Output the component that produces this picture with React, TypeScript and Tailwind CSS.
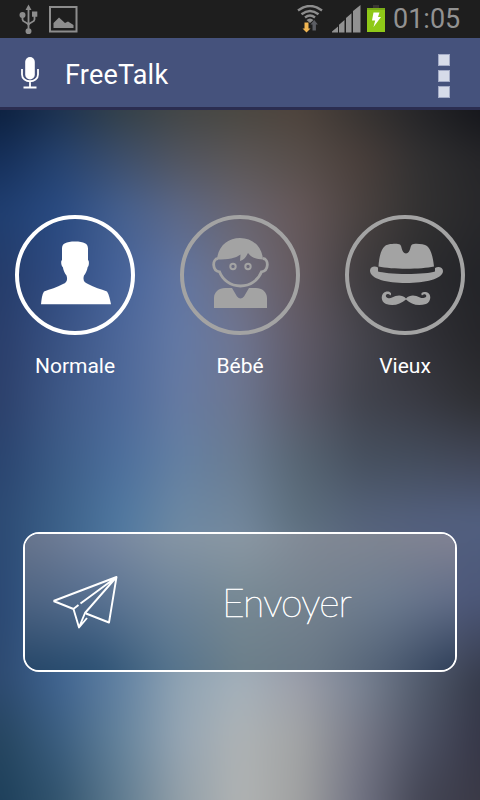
import { useState } from "react";
import type { ReactNode } from "react";

type Voice = "normale" | "bebe" | "vieux";

type MeshProps = {
  id: string;
  width: number;
  height: number;
  stops: number[];
  rows: { y: number; colors: string[] }[];
};

// How far the mesh runs past its box, so that the blur never shows an edge
const BLEED = 50;

// Each row is a horizontal gradient that fades in from the row above it.
function ColorMesh({ id, width, height, stops, rows }: MeshProps) {
  const area = { x: -BLEED, y: -BLEED, width: width + BLEED * 2, height: height + BLEED * 2 };

  return (
    <svg
      aria-hidden="true"
      viewBox={`0 0 ${width} ${height}`}
      className="absolute inset-0 h-full w-full overflow-visible blur-[12px]"
    >
      {rows.map((row, i) => (
        <g key={row.y}>
          <linearGradient id={`${id}-row-${i}`} gradientUnits="userSpaceOnUse" x1={0} x2={width}>
            {row.colors.map((color, c) => (
              <stop key={c} offset={stops[c] / width} stopColor={color} />
            ))}
          </linearGradient>
          {i > 0 && (
            <>
              <linearGradient
                id={`${id}-fade-${i}`}
                gradientUnits="userSpaceOnUse"
                x1={0}
                x2={0}
                y1={rows[i - 1].y}
                y2={row.y}
              >
                <stop offset={0} stopColor="#fff" stopOpacity={0} />
                <stop offset={1} stopColor="#fff" stopOpacity={1} />
              </linearGradient>
              <mask id={`${id}-mask-${i}`} maskUnits="userSpaceOnUse" {...area}>
                <rect {...area} fill={`url(#${id}-fade-${i})`} />
              </mask>
            </>
          )}
          <rect {...area} fill={`url(#${id}-row-${i})`} mask={i > 0 ? `url(#${id}-mask-${i})` : undefined} />
        </g>
      ))}
    </svg>
  );
}

const PAGE_STOPS = [0, 60, 120, 180, 240, 300, 360, 420, 480];

const PAGE_ROWS = [
  { y: 0, colors: ["#0c203f", "#1d3250", "#334049", "#434646", "#4a4741", "#4e433c", "#383432", "#252528", "#15161b"] },
  { y: 50, colors: ["#152f5a", "#264370", "#3d4f6d", "#525661", "#5c5757", "#584f4b", "#4a3f3b", "#323132", "#262629"] },
  { y: 100, colors: ["#1f3e70", "#2a4b82", "#45608f", "#5d6886", "#69656f", "#665859", "#4b4341", "#333232", "#28282b"] },
  { y: 165, colors: ["#253c6a", "#304c82", "#46639a", "#6276a2", "#706f80", "#655a5f", "#403d40", "#2c2c2f", "#232428"] },
  { y: 230, colors: ["#2a3e6b", "#3a5384", "#4d6799", "#647aa6", "#6f7591", "#615b68", "#46454d", "#323238", "#26262a"] },
  { y: 290, colors: ["#2c406b", "#3e5886", "#4d6999", "#667ba3", "#6c7690", "#5c5b6a", "#42444e", "#393a43", "#2e2f33"] },
  { y: 350, colors: ["#2a446f", "#3c5c87", "#4d6f9c", "#6480a3", "#6a7c92", "#576573", "#475160", "#444d5d", "#424758"] },
  { y: 410, colors: ["#2c4a73", "#3c6189", "#5078a0", "#6c88a3", "#71869b", "#5d6f7e", "#55637a", "#53607d", "#526080"] },
  { y: 490, colors: ["#2b4873", "#3d648f", "#577d9f", "#7890a8", "#8494a8", "#74839a", "#606b85", "#545e80", "#4c5778"] },
  { y: 570, colors: ["#2d4a70", "#416591", "#6282a3", "#90a4b4", "#a4b1bb", "#9c9faa", "#7a8494", "#535d6e", "#353a4a"] },
  { y: 630, colors: ["#25455f", "#3b5e80", "#64839c", "#95a5b3", "#aeb3b5", "#a2a4a5", "#787a88", "#4e5365", "#363748"] },
  { y: 690, colors: ["#1d3f5a", "#32546e", "#5f7b90", "#929fa8", "#b0b3b3", "#a0a1a1", "#707282", "#444655", "#3a3946"] },
];

const BUTTON_STOPS = [0, 72, 144, 216, 288, 360, 432];

const BUTTON_ROWS = [
  { y: 0, colors: ["#68758d", "#7585a0", "#8595a5", "#8a98a4", "#818995", "#7f8592", "#828394"] },
  { y: 67, colors: ["#4d6382", "#566f90", "#6b8299", "#778994", "#75828f", "#6c7b8f", "#606c87"] },
  { y: 138, colors: ["#244567", "#2b5073", "#53728c", "#6c7f8a", "#697886", "#505f74", "#2c3c56"] },
];

function UsbIcon() {
  return (
    <svg viewBox="0 0 20 30" className="h-[30px] w-5 fill-none stroke-[#8d8d8d] stroke-[1.8]">
      <path d="M9.500 5v21M3.500 11v4.500c0 3 6 2.500 6 6M15.500 10v5.500c0 3-6 2.500-6 6" />
      <path d="M9.500 0.500l3 5.500h-6zM0.500 11a3 3 0 1 0 6 0a3 3 0 1 0-6 0M13 7.500h5.300v5.300H13zM6.500 27.200a3 3 0 1 0 6 0a3 3 0 1 0-6 0" className="fill-[#8d8d8d] stroke-none" />
    </svg>
  );
}

function PictureIcon() {
  return (
    <svg viewBox="0 0 29 27" className="h-[27px] w-[29px]">
      <rect x="1" y="1" width="26.500" height="24.500" className="fill-none stroke-[#8d8d8d] stroke-2" />
      <path d="M4.500 22v-5l5.500-5.500 6 5.500 3-1.500 5.500 3.500V22z" className="fill-[#8d8d8d]" />
    </svg>
  );
}

function WifiIcon() {
  return (
    <svg viewBox="0 0 26 28" className="h-7 w-[26px]">
      <g className="fill-none stroke-[#8d8d8d] stroke-[2.400]">
        <path d="M1 5.500Q13-3.500 25 5.500" />
        <path d="M4.500 9.300Q13 2.500 21.500 9.300" />
        <path d="M8 12.500Q13 8.500 18 12.500" />
      </g>
      <path d="M9.500 15Q13 11.800 16.500 15L13 18z" className="fill-[#8d8d8d]" />
      <path d="M7.500 17.500h4v6h2L9.500 27.500 5.500 23.500h2z" className="fill-[#f0b552]" />
      <path d="M15.500 25.500v-6h-2l3.700-4.500 3.700 4.500h-2v6z" className="fill-[#5b5d63]" />
    </svg>
  );
}

function SignalIcon() {
  return (
    <svg viewBox="0 0 29 28" className="h-7 w-[29px] fill-[#929292]">
      <path d="M0 27.500v-1l6-5v6zM7 27.500v-7.700l5.500-4.800v12.500zM14 27.500V13l5.500-4.800v19.300zM21 27.500V6l7.500-6v27.500z" />
    </svg>
  );
}

function BatteryIcon() {
  return (
    <svg viewBox="0 0 18 27" className="h-[27px] w-[18px]">
      <rect x="6" y="0" width="6" height="3" className="fill-[#3a3632]" />
      <rect y="3" width="18" height="24" className="fill-[#8fc918]" />
      <rect y="3" width="18" height="2" className="fill-[#7aac18]" />
      <path d="M6.500 7.500h6l-1.500 4.500h3L6.500 22l1.700-6.500H5z" className="fill-white" />
    </svg>
  );
}

function MicIcon() {
  return (
    <svg viewBox="0 0 18 32" className="h-8 w-[18px]">
      <rect x="4.200" y="0" width="9.600" height="22.500" rx="4.800" className="fill-white" />
      <path d="M1 12v5.500c0 9 16 9 16 0V12M9 24.500v6M2.500 30.500h13" className="fill-none stroke-white stroke-[1.800]" />
    </svg>
  );
}

function ManIcon() {
  return (
    <path d="M47 33.500C47 28.500 51 26.500 60 26.500s13 2 13 7V45c1.500 1 1 6-.3 7-.7 4-2.200 6.500-3.700 8.500-1.500 5 .5 7 4 8.500 6 3.500 13 5 19 7.500 2 3 3 8 4 12.700H26c.5-4.700 1-9.700 3-12.700 6-2.500 13-4 19-7.500 3.500-1.500 5-4 3.500-8.500-1.500-2-3-4.500-3.700-8.500-1.500-1-2.300-6-.8-7z" />
  );
}

function ChildIcon() {
  return (
    <g>
      <path d="M37 44.500C38 31 48 23 60 23s22 8 23 21.500c-6 0-12-2-15-6.500-2 4-4 7-8 8l.5-6.500c-5 4-12 5-23.500 5z" />
      <path d="M38 43.500c-6 .5-6 12.500 1.500 13.300 3 8 11 14.200 21 14.200s18-6.200 21-14.200c7.500-.8 7.500-12.800 1.500-13.300" className="fill-none stroke-current stroke-[2.800]" />
      <circle cx="53" cy="51.500" r="2.700" className="fill-none stroke-current stroke-2" />
      <circle cx="68" cy="51.500" r="2.700" className="fill-none stroke-current stroke-2" />
      <path d="M34 93V83c0-6 5-10 11-10h7l5 8.500q3.500 4 7 0L69 73h7c6 0 11 4 11 10v10z" />
    </g>
  );
}

function HatIcon() {
  return (
    <g>
      <path d="M33.500 51.500C34 42 36 34.500 40 31c2-2 12-3 15-1.500 2.500 2.500 1 8 6 9 5-1 3.500-6.500 6-9 3-1.500 12-.5 15 1.500 4 3.500 6 11 7 20.500C76 54.500 47 54.500 33.500 51.500z" />
      <path d="M33 52.500c-3-2-8-1-8 3C25 64 42 68 61 68s37-4 37-12c0-4-5-5-8-3v3.500C86 58 75 59 61.500 59S37 57.500 33 56.500z" />
      <path d="M61 83.500c4-4 9-3.500 14-1 3 1.500 7.500 0 6-2.500-1-1.500-3-.5-4 .5-2-3 1.500-4 4-3.500 6 1 5.500 10 0 12-8 2.500-15 .5-20-4.500C55.500 89.500 48 91.500 41 89c-6-2.500-5.500-11.500.5-12.500 3-.5 6 1.500 4 4-1.500-1.500-3.500-2-4.500-.5-1 3 3.500 4 6 2.500 5-2.500 10-3 14 1z" />
    </g>
  );
}

function PaperPlaneIcon() {
  return (
    <svg viewBox="0 0 66 54" className="h-[54px] w-[66px] fill-none stroke-white stroke-[1.900] [stroke-linejoin:round]">
      <path d="M1.500 26L64.500 2 57 47.500 34 38.500M1.500 26l20 8L27 52.500 33 38 64.500 2M27 52.500l8-9.500M64.500 2L28.500 28.500M26.500 30l-4.500 3.500" />
    </svg>
  );
}

const VOICES: { id: Voice; label: string; icon: ReactNode }[] = [
  { id: "normale", label: "Normale", icon: <ManIcon /> },
  { id: "bebe", label: "Bébé", icon: <ChildIcon /> },
  { id: "vieux", label: "Vieux", icon: <HatIcon /> },
];

function StatusBar() {
  return (
    <div className="flex h-[38px] items-start bg-[#1e1e1e]">
      <div className="flex pt-1 pl-[19px]">
        <UsbIcon />
        <div className="pt-0.5 pl-[10px]">
          <PictureIcon />
        </div>
      </div>
      <div className="ml-auto flex pt-[5px] pr-[20px]">
        <WifiIcon />
        <div className="pl-[9px]">
          <SignalIcon />
        </div>
        <div className="pl-[6px]">
          <BatteryIcon />
        </div>
        <span className="w-[75px] pl-2 text-[27px] leading-[28px] whitespace-nowrap text-[#929292]">01:05</span>
      </div>
    </div>
  );
}

function ActionBar() {
  return (
    <header className="flex h-[72px] items-start border-b-3 border-[#2b2d50] bg-[#45527c] pr-[30px] pl-[21px]">
      <div className="pt-[19px]">
        <MicIcon />
      </div>
      <h1 className="pt-[21px] pl-[26px] text-[27px] leading-8 tracking-[0.2px] text-white">FreeTalk</h1>
      <button type="button" aria-label="Menu" className="ml-auto flex flex-col gap-1 pt-4">
        <span className="size-3 border border-[#a3abc6] bg-[#d6dbe9]" />
        <span className="size-3 border border-[#a3abc6] bg-[#d6dbe9]" />
        <span className="size-3 border border-[#a3abc6] bg-[#d6dbe9]" />
      </button>
    </header>
  );
}

export default function App() {
  const [voice, setVoice] = useState<Voice>("normale");

  return (
    <div className="flex h-[800px] w-[480px] flex-col overflow-hidden font-[Roboto,sans-serif]">
      <StatusBar />
      <ActionBar />
      <main className="relative flex flex-1 flex-col overflow-hidden">
        <ColorMesh id="page" width={480} height={690} stops={PAGE_STOPS} rows={PAGE_ROWS} />

        <div className="relative flex justify-between px-[15px] pt-[105px]">
          {VOICES.map((item) => (
            <button key={item.id} type="button" onClick={() => setVoice(item.id)} className="flex flex-col items-center">
              <svg
                viewBox="0 0 120 120"
                className={voice === item.id ? "size-[120px] fill-current text-white" : "size-[120px] fill-current text-[#a3a3a3]"}
              >
                <circle cx="60" cy="60" r="58" className="fill-none stroke-current stroke-4" />
                {item.icon}
              </svg>
              <span className="pt-[17px] text-[21px] leading-7 text-white">{item.label}</span>
            </button>
          ))}
        </div>

        <button
          type="button"
          className="relative mx-[23px] mt-[152px] flex h-[140px] items-center overflow-hidden rounded-2xl border-2 border-white"
        >
          <ColorMesh id="send" width={430} height={136} stops={BUTTON_STOPS} rows={BUTTON_ROWS} />
          <span className="relative pl-[27px]">
            <PaperPlaneIcon />
          </span>
          <span className="relative pl-[104px] font-[Lato,sans-serif] text-[39px] font-thin tracking-[-0.8px] text-white [-webkit-text-stroke:0.7px_white]">
            Envoyer
          </span>
        </button>
      </main>
    </div>
  );
}
